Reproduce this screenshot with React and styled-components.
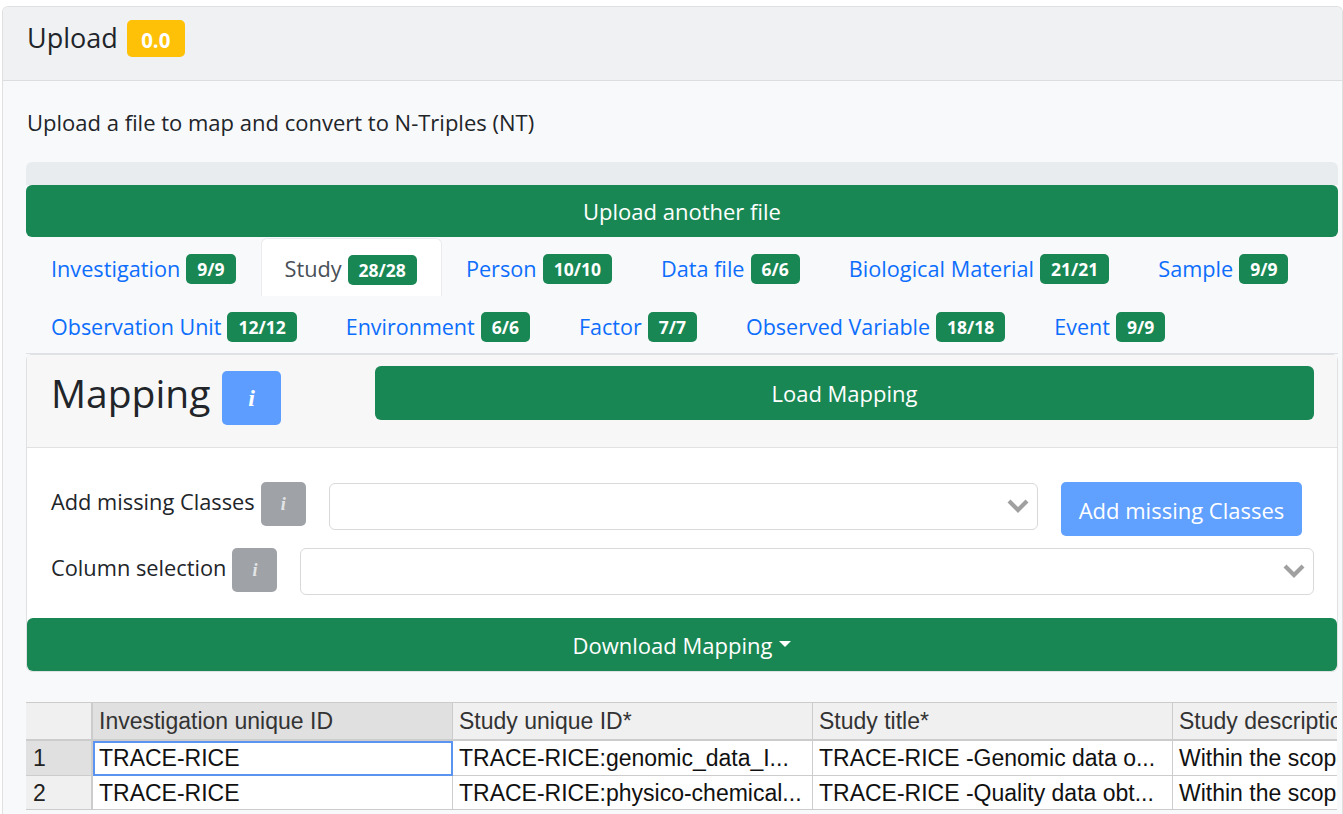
import React from "react";
import styled, { createGlobalStyle } from "styled-components";

const Global = createGlobalStyle`
  html, body { margin: 0; padding: 0; height: 814px; overflow: hidden; background: #fff; }
  body { font-family: "Open Sans", "Noto Sans", sans-serif; color: #212529; }
  * { box-sizing: border-box; }
`;

const Card = styled.div`
  margin: 6px 0 0 2px;
  width: 1341px;
  height: 808px;
  background: #f8f9fb;
  border: 1px solid #dfe0e2;
  border-bottom: 0;
  border-radius: 6px 6px 0 0;
  overflow: hidden;
`;
const Header = styled.header`
  height: 74px;
  background: #f0f1f3;
  border-bottom: 1px solid #dcdde0;
  padding: 13px 0 0 24px;
  display: flex;
  align-items: flex-start;
  gap: 9px;
`;
const HeaderTitle = styled.h1`
  margin: 0;
  font-size: 27px;
  line-height: 36px;
  font-weight: 400;
`;
const VersionBadge = styled.span`
  width: 58px;
  height: 37px;
  background: #ffc107;
  border-radius: 5px;
  color: #fff;
  font-size: 20.5px;
  font-weight: 700;
  display: flex;
  align-items: center;
  justify-content: center;
  padding-top: 2px;
`;
const Body = styled.div`
  padding: 0 4px 0 23px;
`;
const Lead = styled.p`
  margin: 0;
  height: 81px;
  padding: 25px 0 0 1px;
  font-size: 22px;
  line-height: 32px;
`;
const Progress = styled.div`
  height: 23px;
  background: #e9ecef;
  border-radius: 6px 6px 0 0;
`;
const GreenButton = styled.button`
  display: flex;
  align-items: center;
  justify-content: center;
  gap: 7px;
  border: 0;
  background: #198754;
  color: #fff;
  font-family: inherit;
  font-size: 22px;
  border-radius: 6px;
  width: ${p => p.$width || "100%"};
  height: ${p => p.$height}px;
  padding: 0;
`;
const Caret = styled.span`
  display: block;
  margin-top: -2px;
  border-top: 6px solid #fff;
  border-left: 6px solid transparent;
  border-right: 6px solid transparent;
`;
const Tabs = styled.nav`
  height: 117px;
  padding-top: 1px;
  border-bottom: 1px solid #dee2e6;
`;
const TabRow = styled.div`
  display: flex;
  height: 58px;
  font-size: ${p => p.$size}px;
`;
const Tab = styled.a`
  height: 58px;
  padding: 2px 24px 0 25px;
  display: flex;
  align-items: center;
  gap: 6px;
  white-space: nowrap;
  color: ${p => (p.$active ? "#495057" : "#0d6efd")};
  background: ${p => (p.$active ? "#fff" : "transparent")};
  border-radius: 6px 6px 0 0;
  ${p => p.$active && "border: 1px solid #e9ebee; border-bottom: 0; padding: 2px 24px 0 23px; margin: 0 -1px 0 1px;"}
`;
const CountBadge = styled.span`
  height: 30px;
  padding: 0 11px;
  background: #198754;
  color: #fff;
  border-radius: 5px;
  font-size: 17.5px;
  font-weight: 700;
  display: flex;
  align-items: center;
  margin-top: 2px;
`;
const Panel = styled.section`
  background: #fff;
  border: 1px solid #e0e1e3;
  border-radius: 6px;
  height: 318px;
`;
const PanelHead = styled.div`
  height: 93px;
  background: #f7f7f7;
  border-bottom: 1px solid #e0e1e3;
  padding: 11px 23px 0 24px;
  display: flex;
  align-items: flex-start;
`;
const PanelTitle = styled.h2`
  margin: 0;
  font-size: 39px;
  line-height: 54px;
  font-weight: 400;
  width: 171px;
`;
const InfoButton = styled.button`
  border: 0;
  padding: 0;
  flex: none;
  width: ${p => p.$w}px;
  height: ${p => p.$h}px;
  background: ${p => p.$bg};
  color: ${p => p.$fg || "#fff"};
  border-radius: 5px;
  font-family: "Liberation Serif", serif;
  font-style: italic;
  font-weight: 700;
  font-size: ${p => p.$size}px;
  display: flex;
  align-items: center;
  justify-content: center;
`;
const HeadInfo = styled(InfoButton)`
  margin: 5px 94px 0 0;
`;
const PanelBody = styled.div`
  padding: 34px 23px 0 24px;
`;
const FormRow = styled.div`
  display: flex;
  align-items: flex-start;
  margin-bottom: ${p => p.$mb || 0}px;
`;
const Label = styled.label`
  font-size: 21.8px;
  line-height: 39px;
  white-space: nowrap;
  margin-right: 6px;
`;
const Select = styled.div`
  flex: 1;
  height: 47px;
  margin: ${p => p.$top || 0}px 0 0 23px;
  background: #fff;
  border: 1px solid #d8d9db;
  border-radius: 6px;
  display: flex;
  align-items: center;
  justify-content: flex-end;
  padding-right: 8px;
`;
const Chevron = styled.svg`
  width: 22px;
  height: 16px;
  display: block;
  margin-top: -1px;
`;
const AddButton = styled.button`
  flex: none;
  width: 241px;
  height: 54px;
  margin: 0 12px 0 23px;
  border: 0;
  border-radius: 5px;
  background: #60a0ff;
  color: #fff;
  font-family: inherit;
  font-size: 22px;
  padding: 2px 0 0;
`;
const TableWrap = styled.div`
  margin-top: 30px;
  width: 1311px;
  overflow: hidden;
  display: grid;
  grid-template-columns: 67px 360px 360px 360px 360px;
  grid-template-rows: 38px 35px 34px;
  font-family: "Liberation Sans", Arial, sans-serif;
  font-size: 23px;
  border-top: 1px solid #ccc;
`;
const HeadCell = styled.div`
  background: ${p => (p.$on ? "#e0e0e0" : "#f0f0f0")};
  color: #333;
  border-right: ${p => (p.$corner ? 2 : 1)}px solid #ccc;
  border-bottom: 2px solid #ccc;
  padding: 0 6px;
  line-height: 37px;
  white-space: nowrap;
  overflow: hidden;
`;
const RowHead = styled.div`
  background: ${p => (p.$on ? "#e0e0e0" : "#f0f0f0")};
  color: #222;
  border-right: 2px solid #ccc;
  border-bottom: 1px solid #ccc;
  padding: 0 7px;
  line-height: 35px;
`;
const Cell = styled.div`
  background: #fff;
  color: #111;
  border-right: 1px solid #ccc;
  border-bottom: 1px solid #ccc;
  padding: 0 6px;
  line-height: 35px;
  white-space: nowrap;
  overflow: hidden;
  ${p => p.$selected && "outline: 2px solid #5b93f0; outline-offset: -2px;"}
`;

const tabRows = [
  { size: 21.7, tabs: [
    ["Investigation", "9/9"], ["Study", "28/28", true], ["Person", "10/10"], ["Data file", "6/6"],
    ["Biological Material", "21/21"], ["Sample", "9/9"],
  ] },
  { size: 21.5, tabs: [
    ["Observation Unit", "12/12"], ["Environment", "6/6"], ["Factor", "7/7"],
    ["Observed Variable", "18/18"], ["Event", "9/9"],
  ] },
];

const Arrow = () => (
  <Chevron viewBox="0 0 22 16">
    <polyline points="2,3 11,12 20,3" fill="none" stroke="#a0a0a0" strokeWidth="4.2" />
  </Chevron>
);

const rows = [
  ["1", "TRACE-RICE", "TRACE-RICE:genomic_data_I...", "TRACE-RICE -Genomic data o...", "Within the scope of the TRACE-RICE"],
  ["2", "TRACE-RICE", "TRACE-RICE:physico-chemical...", "TRACE-RICE -Quality data obt...", "Within the scope of the TRACE-RICE"],
];

export default function App() {
  return (
    <>
      <Global />
      <Card>
        <Header>
          <HeaderTitle>Upload</HeaderTitle>
          <VersionBadge>0.0</VersionBadge>
        </Header>
        <Body>
          <Lead>Upload a file to map and convert to N-Triples (NT)</Lead>
          <Progress />
          <GreenButton $height={52}>Upload another file</GreenButton>
          <Tabs>
            {tabRows.map(row => (
              <TabRow key={row.size} $size={row.size}>
                {row.tabs.map(([t, c, a]) => (
                  <Tab key={t} $active={a}>{t}<CountBadge>{c}</CountBadge></Tab>
                ))}
              </TabRow>
            ))}
          </Tabs>
          <Panel>
            <PanelHead>
              <PanelTitle>Mapping</PanelTitle>
              <HeadInfo $w={59} $h={54} $bg="#5c9dff" $size={24}>i</HeadInfo>
              <GreenButton $height={54} $width="939px">Load Mapping</GreenButton>
            </PanelHead>
            <PanelBody>
              <FormRow $mb={12}>
                <Label>Add missing Classes</Label>
                <InfoButton $w={45} $h={44} $bg="#9fa3a8" $fg="#e4e5e7" $size={18}>i</InfoButton>
                <Select $top={1}><Arrow /></Select>
                <AddButton>Add missing Classes</AddButton>
              </FormRow>
              <FormRow $mb={23}>
                <Label>Column selection</Label>
                <InfoButton $w={45} $h={44} $bg="#9fa3a8" $fg="#e4e5e7" $size={18}>i</InfoButton>
                <Select><Arrow /></Select>
              </FormRow>
            </PanelBody>
            <GreenButton $height={53}>Download Mapping<Caret /></GreenButton>
          </Panel>
          <TableWrap>
            <HeadCell $corner />
            <HeadCell $on>Investigation unique ID</HeadCell>
            <HeadCell>Study unique ID*</HeadCell>
            <HeadCell>Study title*</HeadCell>
            <HeadCell>Study description*</HeadCell>
            {rows.map((r, i) => (
              <React.Fragment key={r[0]}>
                <RowHead $on={i === 0}>{r[0]}</RowHead>
                <Cell $selected={i === 0}>{r[1]}</Cell>
                <Cell>{r[2]}</Cell>
                <Cell>{r[3]}</Cell>
                <Cell>{r[4]}</Cell>
              </React.Fragment>
            ))}
          </TableWrap>
        </Body>
      </Card>
    </>
  );
}
